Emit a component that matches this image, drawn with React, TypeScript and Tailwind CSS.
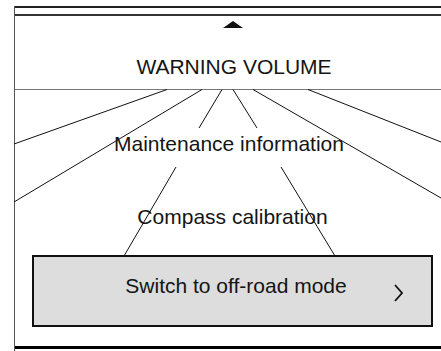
import React from "react";

export default function App() {
  return (
    <div
      className="relative w-[441px] h-[351px] overflow-hidden bg-white text-[#141414]"
      style={{ fontFamily: '"Liberation Sans", Arial, sans-serif' }}
    >
      <div className="ml-[14px] mt-[6px] w-[436px] h-[345px] border-l-[1.5px] border-[#555] flex flex-col">
        <div className="h-[2px] bg-[#222]" />
        <div className="h-[6px]" />
        <div className="h-[2px] bg-[#333]" />
        <div className="h-[73px] flex flex-col items-center">
          <div className="mt-[5px] w-0 h-0 border-l-[10.5px] border-r-[10.5px] border-b-[7px] border-l-transparent border-r-transparent border-b-[#111]" />
          <div className="mt-[27px] pl-[3px] text-[21px] leading-[24px] text-center">WARNING VOLUME</div>
        </div>
        <div className="h-px bg-[#777]" />
        <div className="mt-[42px] pr-[7px] text-[21px] leading-[24px] text-center">Maintenance information</div>
        <div className="mt-[49px] text-[21px] leading-[24px] text-center">Compass calibration</div>
        <div className="mt-[26px] mx-[17px] h-[72px] border-2 border-[#111] bg-[#dcdddc] flex items-start">
          <span className="flex-1 pl-[44px] mt-[17px] text-[21px] leading-[24px] text-center whitespace-nowrap">
            Switch to off-road mode
          </span>
          <svg className="mt-[27px] mr-[28px]" width="9" height="18" viewBox="0 0 9 18">
            <polyline points="1,1 8,9 1,17" fill="none" stroke="#111" strokeWidth="1.8" />
          </svg>
        </div>
        <div className="mt-[19px] h-[3px] bg-[#000]" />
      </div>
      <svg className="absolute inset-0 pointer-events-none" width="441" height="351" viewBox="0 0 441 351">
        <g stroke="#111" strokeWidth="1" fill="none">
          <line x1="167" y1="89.5" x2="14" y2="144" />
          <line x1="202" y1="89.5" x2="14" y2="202" />
          <line x1="222" y1="89.5" x2="199" y2="128" />
          <line x1="176" y1="167" x2="124" y2="256" />
          <line x1="233" y1="89.5" x2="257" y2="128" />
          <line x1="281" y1="167" x2="335" y2="256" />
          <line x1="253" y1="89.5" x2="441" y2="198" />
          <line x1="308" y1="89.5" x2="441" y2="142" />
        </g>
      </svg>
    </div>
  );
}
